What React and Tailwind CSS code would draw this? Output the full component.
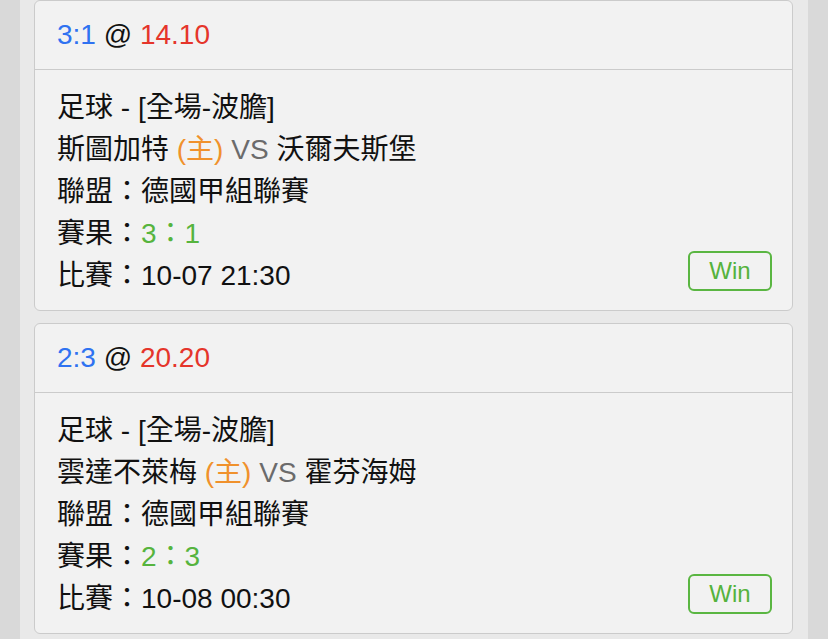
import React from "react";

const font = { fontFamily: '"Liberation Sans", "Noto Sans CJK TC", sans-serif' };

function Card({ score, odds, home, away, league, result, time }) {
  return (
    <div className="bg-[#f2f2f2] border border-[#cbcbcb] rounded-[6px] h-[311px] flex flex-col shrink-0">
      <div className="h-[69px] border-b border-[#cbcbcb] pl-[22px] flex items-center text-[28px] leading-[42px]">
        <span className="text-[#2f72f1]">{score}</span>
        <span className="text-[#111]">&nbsp;@&nbsp;</span>
        <span className="text-[#e5352b]">{odds}</span>
      </div>
      <div className="flex-1 pl-[22px] pr-[20px] pt-[16px] pb-[13px] flex items-end justify-between text-[28px] leading-[42px] text-[#111]">
        <div>
          <div>足球 - [全場-波膽]</div>
          <div>
            {home} <span className="text-[#f0912c]">(主)</span>{" "}
            <span className="text-[#6b6b6b]">VS</span> {away}
          </div>
          <div>聯盟：{league}</div>
          <div>
            賽果：<span className="text-[#56b43e]">{result}</span>
          </div>
          <div>比賽：{time}</div>
        </div>
        <div className="w-[84px] h-[40px] mb-[6px] border-2 border-[#5ab642] rounded-[6px] flex items-center justify-center text-[24px] leading-none text-[#55b23d]">
          Win
        </div>
      </div>
    </div>
  );
}

export default function App() {
  return (
    <div style={font} className="w-[828px] h-[639px] bg-[#d9d9d9] flex overflow-hidden">
      <div className="ml-[20px] w-[788px] h-full bg-[#e9e9e9] px-[14px] pr-[15px] flex flex-col gap-[12px]">
        <Card
          score="3:1"
          odds="14.10"
          home="斯圖加特"
          away="沃爾夫斯堡"
          league="德國甲組聯賽"
          result="3：1"
          time="10-07 21:30"
        />
        <Card
          score="2:3"
          odds="20.20"
          home="雲達不萊梅"
          away="霍芬海姆"
          league="德國甲組聯賽"
          result="2：3"
          time="10-08 00:30"
        />
      </div>
    </div>
  );
}
